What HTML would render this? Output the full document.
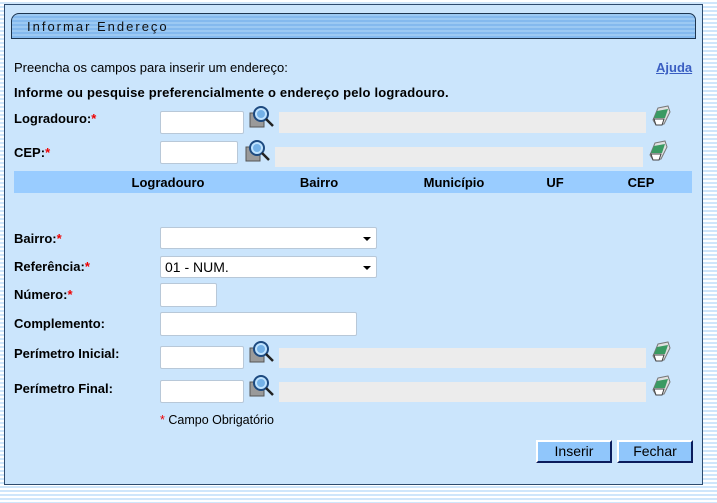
<!DOCTYPE html>
<html><head><meta charset="utf-8"><style>
*{margin:0;padding:0;box-sizing:border-box}
body{width:717px;height:503px;overflow:hidden;font-family:"Liberation Sans",Arial,sans-serif;font-size:13px;color:#000;
background:repeating-linear-gradient(to bottom,#fff 0,#fff 2px,#cfe6fb 2px,#cfe6fb 4px);position:relative}
.panel{position:absolute;left:4px;top:4px;width:699px;height:481px;background:#cbe5fc;border:1px solid #2e4b6e}
.a{position:absolute}
.title{left:11px;top:13px;width:685px;height:26px;border:1px solid #1d3550;border-radius:8px 7px 0 0;
background:repeating-linear-gradient(to bottom,#9cc9f3 0,#9cc9f3 2px,#84b9ee 2px,#84b9ee 4px);font-size:13px;letter-spacing:2px;padding:5px 0 0 15px;color:#111}
.b{font-weight:bold;font-size:13px}
.r{color:#e00}
.in{position:absolute;background:#fff;border:1px solid #b8c8d8;border-radius:2px}
.g{position:absolute;background:#ececec}
.sel{position:absolute;background:#fff;border:1px solid #b8c8d8;border-radius:2px;font-size:14px;padding:2px 4px}
.sel:after{content:"";position:absolute;right:5px;top:9px;border-left:4px solid transparent;border-right:4px solid transparent;border-top:4px solid #000}
.hdr{left:14px;top:171px;width:678px;height:22px;background:#99ccff}
.hdr span{position:absolute;top:4px;font-weight:bold;transform:translateX(-50%)}
.btn{position:absolute;width:76px;height:23px;background:#90c6fb;border:2px solid;border-color:#fff #0b1c5c #0b1c5c #fff;font-size:14px;text-align:center;line-height:19px}
</style></head><body>
<div class="panel"></div>
<div class="a title">Informar Endereço</div>
<div class="a" style="left:14px;top:60px">Preencha os campos para inserir um endereço:</div>
<div class="a" style="left:656px;top:60px;color:#3a5ec2;font-weight:bold;text-decoration:underline;font-size:13px">Ajuda</div>
<div class="a b" style="left:14px;top:85px;letter-spacing:0.2px">Informe ou pesquise preferencialmente o endereço pelo logradouro.</div>

<svg width="0" height="0" style="position:absolute"><defs>
<g id="lupa"><rect x="1" y="8" width="14" height="14" fill="#9a9a9a" stroke="#555"/><circle cx="12" cy="9" r="7" fill="#bfe3ff" stroke="#1d4a80" stroke-width="2"/><circle cx="12" cy="9" r="4" fill="#2a7fd0" opacity=".5"/><line x1="17" y1="14" x2="24" y2="21" stroke="#222" stroke-width="2.5"/></g>
<g id="er"><path d="M7 3 L17 1 L19 7 L13 19 L5 20 L2 15 Z" fill="#e0e0e0" stroke="#777"/><path d="M6 6 L17 4 L14 13 L3 13 Z" fill="#3a9a62"/><path d="M3 14 L13 14 L11 20 L5 20Z" fill="#fff" stroke="#444"/></g>
</defs></svg>

<div class="a b" style="left:14px;top:111px">Logradouro:<span class="r">*</span></div>
<div class="in" style="left:160px;top:111px;width:84px;height:23px"></div>
<svg class="a" style="left:249px;top:105px" width="26" height="24"><use href="#lupa"/></svg>
<div class="g" style="left:279px;top:112px;width:367px;height:21px"></div>
<svg class="a" style="left:651px;top:105px" width="22" height="24"><use href="#er"/></svg>

<div class="a b" style="left:14px;top:145px">CEP:<span class="r">*</span></div>
<div class="in" style="left:160px;top:141px;width:78px;height:23px"></div>
<svg class="a" style="left:245px;top:139px" width="26" height="24"><use href="#lupa"/></svg>
<div class="g" style="left:275px;top:147px;width:368px;height:20px"></div>
<svg class="a" style="left:648px;top:140px" width="22" height="24"><use href="#er"/></svg>

<div class="a hdr"><span style="left:154px">Logradouro</span><span style="left:305px">Bairro</span><span style="left:440px">Município</span><span style="left:541px">UF</span><span style="left:627px">CEP</span></div>

<div class="a b" style="left:14px;top:231px">Bairro:<span class="r">*</span></div>
<div class="sel" style="left:160px;top:227px;width:217px;height:22px"></div>
<div class="a b" style="left:14px;top:259px">Referência:<span class="r">*</span></div>
<div class="sel" style="left:160px;top:256px;width:217px;height:22px">01 - NUM.</div>
<div class="a b" style="left:14px;top:287px">Número:<span class="r">*</span></div>
<div class="in" style="left:160px;top:283px;width:57px;height:24px"></div>
<div class="a b" style="left:14px;top:316px">Complemento:</div>
<div class="in" style="left:160px;top:312px;width:197px;height:24px"></div>

<div class="a b" style="left:14px;top:346px">Perímetro Inicial:</div>
<div class="in" style="left:160px;top:346px;width:84px;height:23px"></div>
<svg class="a" style="left:249px;top:340px" width="26" height="24"><use href="#lupa"/></svg>
<div class="g" style="left:279px;top:348px;width:367px;height:20px"></div>
<svg class="a" style="left:651px;top:341px" width="22" height="24"><use href="#er"/></svg>

<div class="a b" style="left:14px;top:381px">Perímetro Final:</div>
<div class="in" style="left:160px;top:380px;width:84px;height:23px"></div>
<svg class="a" style="left:249px;top:374px" width="26" height="24"><use href="#lupa"/></svg>
<div class="g" style="left:279px;top:382px;width:367px;height:20px"></div>
<svg class="a" style="left:651px;top:375px" width="22" height="24"><use href="#er"/></svg>

<div class="a" style="left:160px;top:413px;font-size:12.5px"><span class="r">*</span> Campo Obrigatório</div>
<div class="btn" style="left:536px;top:440px">Inserir</div>
<div class="btn" style="left:617px;top:440px">Fechar</div>
</body></html>
